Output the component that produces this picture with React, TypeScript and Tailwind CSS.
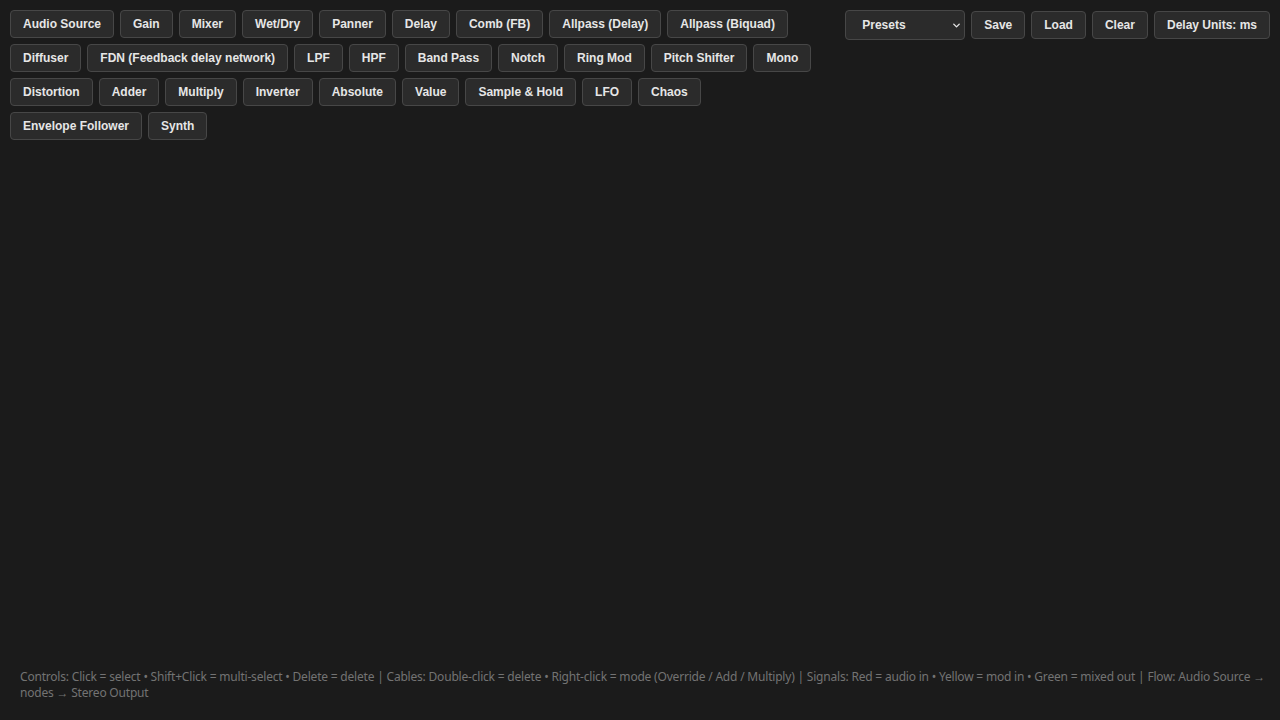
import { ChevronDown } from "lucide-react";

const NODES = [
  "Audio Source",
  "Gain",
  "Mixer",
  "Wet/Dry",
  "Panner",
  "Delay",
  "Comb (FB)",
  "Allpass (Delay)",
  "Allpass (Biquad)",
  "Diffuser",
  "FDN (Feedback delay network)",
  "LPF",
  "HPF",
  "Band Pass",
  "Notch",
  "Ring Mod",
  "Pitch Shifter",
  "Mono",
  "Distortion",
  "Adder",
  "Multiply",
  "Inverter",
  "Absolute",
  "Value",
  "Sample & Hold",
  "LFO",
  "Chaos",
  "Envelope Follower",
  "Synth",
];

const BTN =
  "h-[28px] rounded-[4px] border border-[#474747] bg-[#2b2b2b] px-3 text-[12px] font-bold leading-none text-[#e6e6e6] whitespace-nowrap hover:bg-[#333]";

export default function App() {
  return (
    <div
      className="flex h-screen flex-col bg-[#1b1b1b]"
      style={{ fontFamily: "'Liberation Sans', Arial, sans-serif" }}
    >
      <div className="flex items-start justify-between p-[10px]">
        {/* node palette */}
        <div className="flex w-[820px] flex-wrap gap-1.5">
          {NODES.map((n) => (
            <button key={n} className={BTN}>
              {n}
            </button>
          ))}
        </div>

        {/* toolbar */}
        <div className="flex shrink-0 items-center gap-[6px]">
          <div className="relative">
            <select className="h-[30px] w-[120px] appearance-none rounded-[4px] border border-[#474747] bg-[#2b2b2b] pl-4 text-[12px] font-bold text-[#e6e6e6] outline-none">
              <option>Presets</option>
            </select>
            <ChevronDown
              size={11}
              strokeWidth={3}
              className="pointer-events-none absolute right-[3px] top-[10px] text-[#e6e6e6]"
            />
          </div>
          <button className={BTN}>Save</button>
          <button className={BTN}>Load</button>
          <button className={BTN}>Clear</button>
          <button className={BTN}>Delay Units: ms</button>
        </div>
      </div>

      <div className="flex-1" />

      <div
        className="pb-[19px] pl-5 pr-3 text-[12px] leading-4 tracking-[-0.2px] text-[#737373]"
        style={{ fontFamily: "'Noto Sans', 'Open Sans', sans-serif" }}
      >
        Controls: Click = select • Shift+Click = multi-select • Delete = delete | Cables:
        Double-click = delete • Right-click = mode (Override / Add / Multiply) | Signals:
        Red = audio in • Yellow = mod in • Green = mixed out | Flow: Audio Source → nodes →
        Stereo Output
      </div>
    </div>
  );
}
